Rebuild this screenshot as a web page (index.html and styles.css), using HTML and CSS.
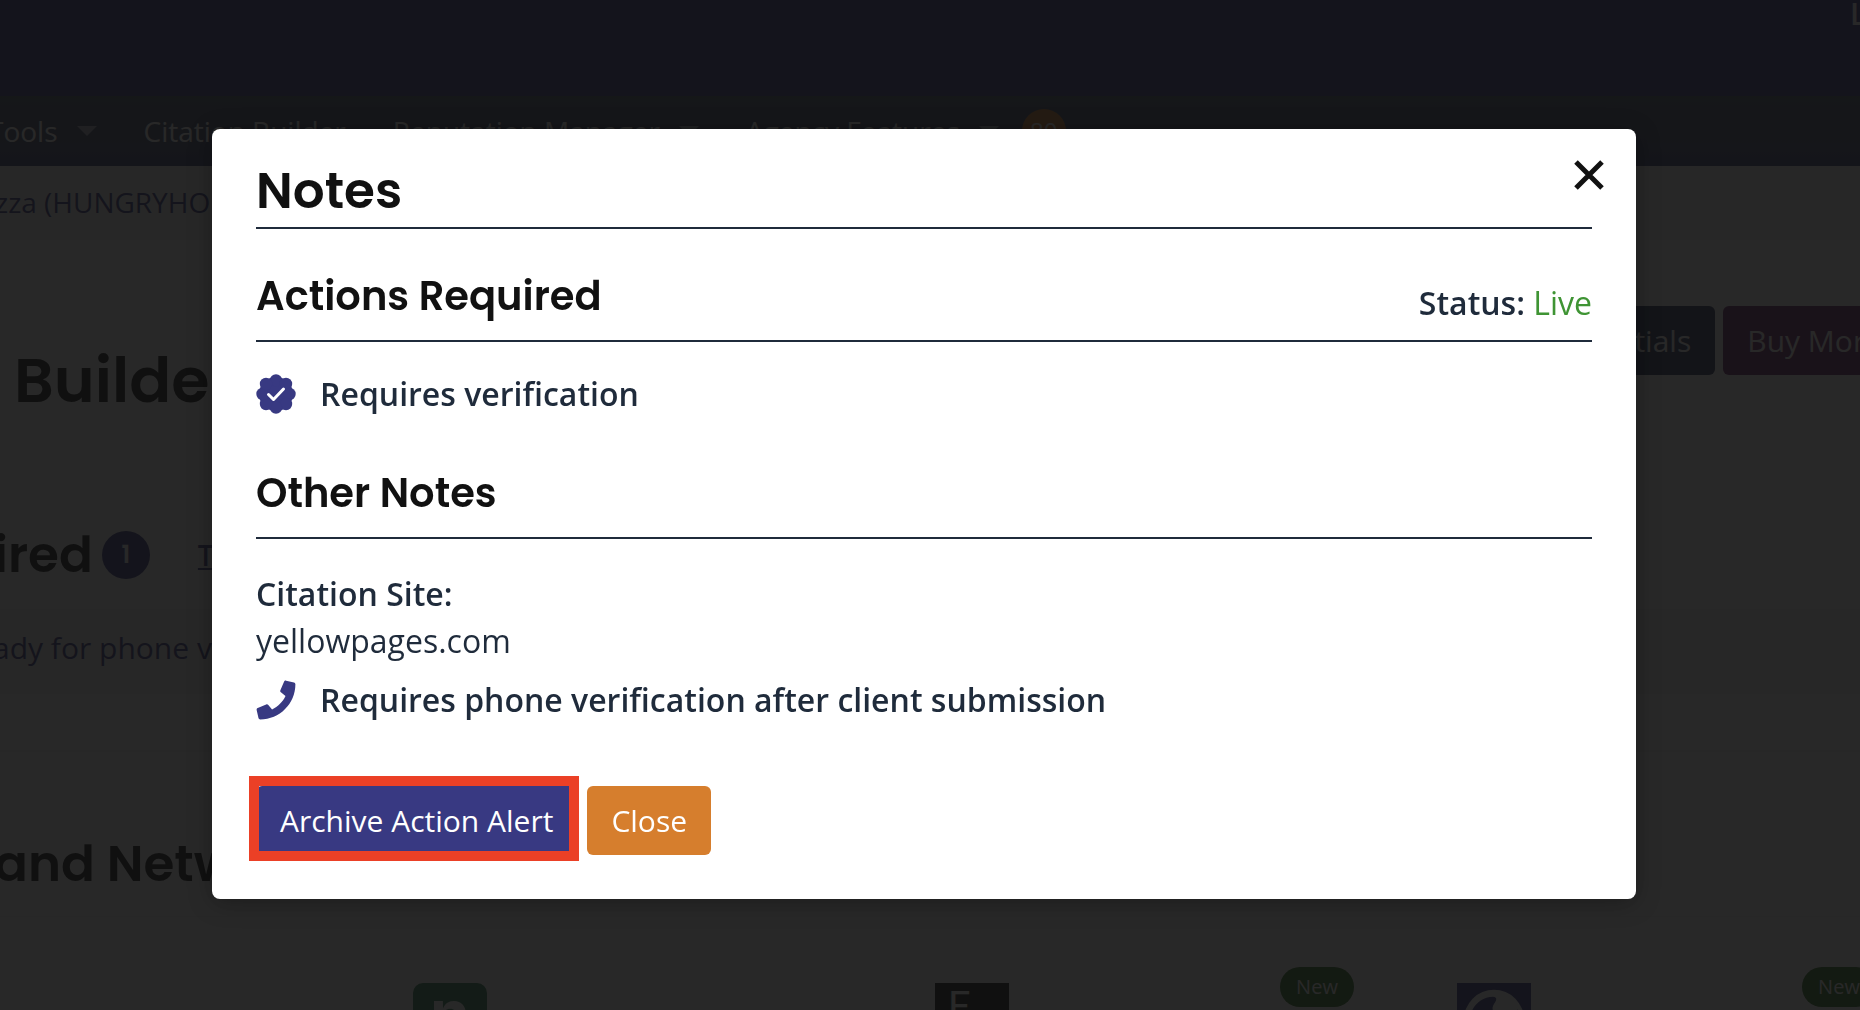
FILE: index.html
```html
<!DOCTYPE html>
<html lang="en">
<head>
<meta charset="utf-8">
<meta name="viewport" content="width=device-width, initial-scale=1">
<title>Notes</title>
<link rel="stylesheet" href="styles.css">
</head>
<body>
<div class="page" aria-hidden="true">
  <header class="topbar"><span class="topbar-user">Lo</span></header>
  <nav class="nav">
    <a class="nav-link" href="#">Tools <i class="caret"></i></a>
    <a class="nav-link" href="#">Citation Builder</a>
    <a class="nav-link" href="#">Reputation Manager <i class="caret"></i></a>
    <a class="nav-link" href="#">Agency Features <i class="caret"></i></a>
    <span class="nav-count">80</span>
  </nav>
  <div class="breadcrumb">zza (HUNGRYHO</div>
  <main>
    <section class="hero">
      <h1 class="hero-title">Builde</h1>
      <div class="hero-actions">
        <button class="btn btn-slate" type="button">Credentials</button>
        <button class="btn btn-plum" type="button">Buy More</button>
      </div>
    </section>
    <section class="alerts">
      <h2 class="section-title">ired</h2>
      <span class="count">1</span>
      <a class="alerts-link" href="#">To</a>
    </section>
    <div class="alert-row">ady for phone v</div>
    <div class="spacer"></div>
    <section class="networks"><h2 class="section-title">and Netw</h2></section>
    <section class="cards">
      <article class="card"></article>
      <article class="card"><div class="logo logo-n">n</div></article>
      <article class="card"><div class="logo logo-f">F</div></article>
      <article class="card">
        <span class="tag">New</span>
        <svg class="logo" viewBox="0 0 76 76"><path fill="#383982" d="M0 0h76v76H0z"/><circle cx="38" cy="38" r="31" fill="#fff"/><path fill="#383982" d="M37 14c4 0 4 3 2 6-3 4-4 8 1 12H14c3-10 12-18 23-18zM60 32l2-5 3 5z"/></svg>
      </article>
      <article class="card"><span class="tag">New</span></article>
    </section>
  </main>
</div>

<div class="overlay">
  <div class="modal" role="dialog" aria-modal="true" aria-labelledby="notes-title">
    <button class="modal-close" type="button" aria-label="Close dialog">
      <svg width="32" height="32" viewBox="0 0 32 32"><path d="M3 3l26 26M29 3L3 29" stroke="#111" stroke-width="5" fill="none"/></svg>
    </button>
    <h2 class="modal-title" id="notes-title">Notes</h2>
    <div class="modal-head">
      <h3 class="modal-subtitle">Actions Required</h3>
      <p class="status"><strong>Status:</strong> <span class="status-live">Live</span></p>
    </div>
    <p class="note note-verify">
      <svg class="note-icon" viewBox="0 0 40 40"><g fill="#383982"><circle cx="20" cy="20" r="17"/><circle cx="20" cy="6.500" r="6.200"/><circle cx="30" cy="10" r="6.200"/><circle cx="33.500" cy="20" r="6.200"/><circle cx="30" cy="30" r="6.200"/><circle cx="20" cy="33.500" r="6.200"/><circle cx="10" cy="30" r="6.200"/><circle cx="6.500" cy="20" r="6.200"/><circle cx="10" cy="10" r="6.200"/></g><path d="M12.500 20.500l5 5 10-10.500" fill="none" stroke="#fff" stroke-width="3" stroke-linecap="round" stroke-linejoin="round"/></svg>
      Requires verification
    </p>
    <div class="modal-head"><h3 class="modal-subtitle">Other Notes</h3></div>
    <dl class="site">
      <dt>Citation Site:</dt>
      <dd>yellowpages.com</dd>
    </dl>
    <p class="note note-phone">
      <svg class="note-icon" viewBox="-8 -8 528 528"><path fill="#383982" d="M493.400 24.600l-104-24c-11.300-2.600-22.900 3.300-27.500 13.900l-48 112c-4.200 9.800-1.400 21.300 6.900 28l60.600 49.600c-36 76.700-98.900 140.500-177.200 177.200l-49.600-60.600c-6.800-8.300-18.200-11.100-28-6.900l-112 48C3.900 366.500-2 378.100.600 389.400l24 104C27.100 504.200 36.700 512 48 512c256.100 0 464-207.500 464-464 0-11.200-7.700-20.900-18.600-23.400z"/></svg>
      Requires phone verification after client submission
    </p>
    <div class="modal-actions">
      <button class="btn btn-primary" type="button">Archive Action Alert</button>
      <button class="btn btn-warn" type="button">Close</button>
    </div>
  </div>
</div>
</body>
</html>
```
FILE: styles.css
```css
* { box-sizing: border-box; }
body {
  margin: 0;
  background: #fff;
  color: #1f2b3b;
  font: 32px/48px "Open Sans", "Noto Sans", sans-serif;
  overflow: hidden;
}
h1, h2, h3, p, dl, dd { margin: 0; }
h1, h2, h3 { color: #111; font-family: Poppins, Inter, sans-serif; font-weight: 600; }

.page { height: 100vh; overflow: hidden; white-space: nowrap; }
.topbar { height: 96px; background: #343488; color: #fff; display: flex; justify-content: flex-end; overflow: hidden; }
.topbar-user { width: 10px; font-size: 30px; font-weight: 600; line-height: 28px; }
.nav {
  height: 70px;
  display: flex;
  align-items: center;
  gap: 47px;
  background: linear-gradient(#445062, #3a4272);
  font-size: 28px;
}
.nav-link { color: #fff; text-decoration: none; display: flex; align-items: center; gap: 19px; }
.nav-link:first-child { margin-left: -12px; }
.caret { border: 10px solid transparent; border-top-color: #a8adbd; border-bottom: 0; }
.nav-count { width: 44px; height: 44px; border-radius: 50%; background: #d67e2d; color: #fff; font-size: 24px; line-height: 44px; text-align: center; margin-left: -24px; }
.breadcrumb { height: 74px; margin-left: -5px; line-height: 72px; background: #f4f4f4; color: #383982; font-size: 28px; }
.hero { height: 268px; padding: 66px 0 0 14px; display: flex; justify-content: space-between; overflow: hidden; }
.hero-title { font-size: 62px; line-height: 150px; }
.hero-actions { display: flex; gap: 8px; align-items: flex-start; margin-right: -46px; }
.alerts { height: 101px; padding-bottom: 8px; margin-left: -6px; display: flex; align-items: center; }
.section-title { font-size: 50px; line-height: 76px; }
.count { width: 48px; height: 48px; margin: 0 48px 0 9px; border-radius: 50%; background: #383982; color: #fff; font: 600 24px/48px Poppins, Inter, sans-serif; text-align: center; }
.alerts-link { color: #383982; font-size: 28px; font-weight: 600; }
.alert-row { height: 85px; margin-left: -7px; padding-top: 15px; background: #f2f2f2; color: #383982; font-size: 30px; }
.spacer { height: 58px; border-bottom: 2px solid #f2f2f2; }
.networks { height: 165px; margin-left: -6px; padding-top: 74px; border-bottom: 1px solid #f4f4f4; }
.cards { display: flex; gap: 54px; padding-top: 31px; margin-left: -306px; background: #f8f8f8; }
.card { flex: none; position: relative; width: 468px; height: 200px; padding-top: 35px; border-radius: 8px; background: #fff; }
.logo { display: block; width: 74px; height: 74px; margin: 0 auto; color: #fff; text-align: center; }
.logo-n { border-radius: 10px; background: #2f7d4f; font: 700 64px/60px Inter, sans-serif; }
.logo-f { background: #111; font: 40px/44px Lato, sans-serif; padding-right: 26px; }
.tag { position: absolute; top: 19px; left: 20px; width: 74px; height: 40px; border-radius: 20px; background: #2f6d20; color: #fff; font-size: 20px; line-height: 40px; text-align: center; }

.btn { height: 69px; padding: 0 24px; border: 0; border-radius: 6px; color: #fff; font: 30px/48px "Open Sans", "Noto Sans", sans-serif; white-space: nowrap; }
.btn-slate { background: #28345c; }
.btn-plum { background: #6a1e64; }
.btn-warn { background: #d67e2d; }
.btn-primary { position: relative; background: #383982; }
.btn-primary::after { content: ""; position: absolute; inset: -10px -2px -6px -7px; border: 10px solid #eb4026; }

.overlay { position: fixed; inset: 0; padding: 129px 224px 0 212px; background: rgba(17, 17, 17, .9); }
.modal { position: relative; padding: 30px 44px 44px; border-radius: 8px; background: #fff; box-shadow: 0 4px 24px rgba(0, 0, 0, .3); }
.modal-close { position: absolute; top: 30px; right: 31px; padding: 0; border: 0; background: none; line-height: 0; }
.modal-title { height: 70px; border-bottom: 2px solid #1f2b3b; font-size: 50px; line-height: 64px; }
.modal-head { display: flex; justify-content: space-between; height: 113px; padding-top: 38px; border-bottom: 2px solid #1f2b3b; }
.modal-subtitle { font-size: 40px; line-height: 58px; }
.status { padding-top: 12px; }
.status strong { font-weight: 600; }
.status-live { color: #3f9434; }
.note { display: flex; align-items: center; gap: 24px; font-weight: 600; }
.note-icon { flex: none; width: 40px; height: 40px; }
.note-verify { margin: 28px 0 8px; }
.site { margin-top: 31px; line-height: 47px; }
.site dt { font-weight: 600; }
.note-phone { margin: 12px 0 62px; }
.modal-actions { display: flex; gap: 10px; }
```
